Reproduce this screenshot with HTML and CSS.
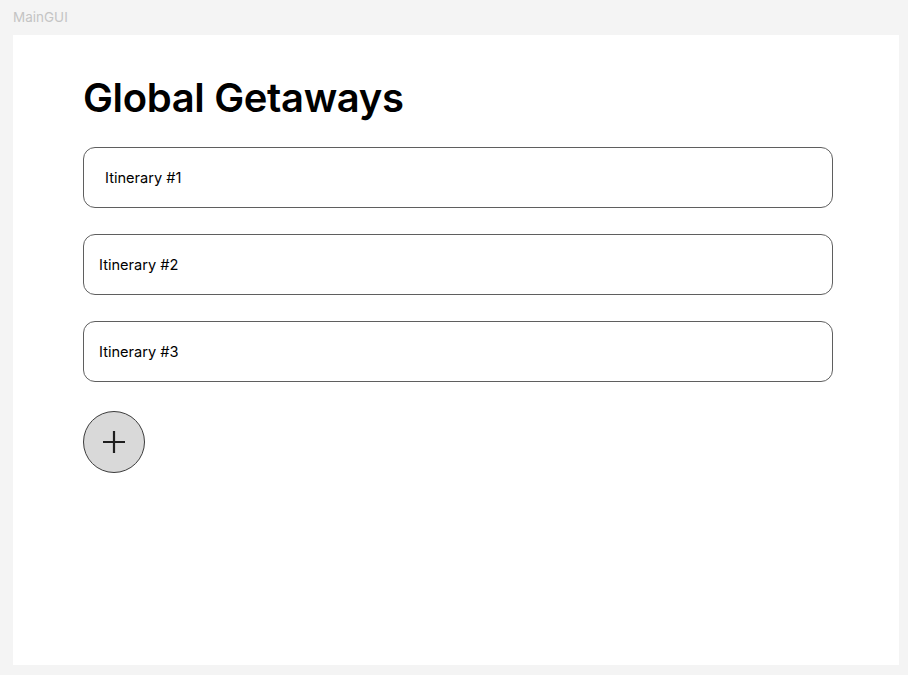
FILE: index.html
```html
<!DOCTYPE html>
<html>
<head>
<meta charset="utf-8">
<link rel="stylesheet" href="styles.css">
</head>
<body>
<div class="label">MainGUI</div>
<main class="frame">
  <h1 class="title">Global Getaways</h1>
  <div class="list">
    <div class="item item-first">Itinerary #1</div>
    <div class="item">Itinerary #2</div>
    <div class="item">Itinerary #3</div>
  </div>
  <button class="add" aria-label="Add">
    <svg width="24" height="24" viewBox="0 0 24 24"><path d="M12 1V23M1 12H23" stroke="#1e1e1e" stroke-width="2.2" fill="none"/></svg>
  </button>
</main>
</body>
</html>
```
FILE: styles.css
```css
html, body {
  margin: 0;
  padding: 0;
  background: #f4f4f4;
  font-family: Inter, "Noto Sans", sans-serif;
}
body {
  padding: 0 9px 10px 13px;
  height: 675px;
  box-sizing: border-box;
  display: flex;
  flex-direction: column;
}
.label {
  font-size: 13.5px;
  color: #c4c4c4;
  height: 35px;
  line-height: 35px;
}
.frame {
  background: #fff;
  flex: 1;
  padding: 39px 66px 0 70px;
  display: flex;
  flex-direction: column;
  align-items: flex-start;
}
.title {
  margin: 0;
  font-size: 40px;
  font-weight: 600;
  line-height: 48px;
  color: #000;
  letter-spacing: -0.35px;
}
.list {
  margin-top: 25px;
  display: flex;
  flex-direction: column;
  gap: 26px;
  width: 100%;
}
.item {
  height: 61px;
  box-sizing: border-box;
  border: 1px solid #5f5f5f;
  border-radius: 12px;
  display: flex;
  align-items: center;
  padding-left: 15px;
  font-size: 14.6px;
  color: #000;
}
.item-first {
  padding-left: 21px;
}
.add {
  margin-top: 29px;
  width: 62px;
  height: 62px;
  border-radius: 50%;
  border: 1px solid #3c3c3c;
  background: #d9d9d9;
  padding: 0;
  display: flex;
  align-items: center;
  justify-content: center;
}
```
